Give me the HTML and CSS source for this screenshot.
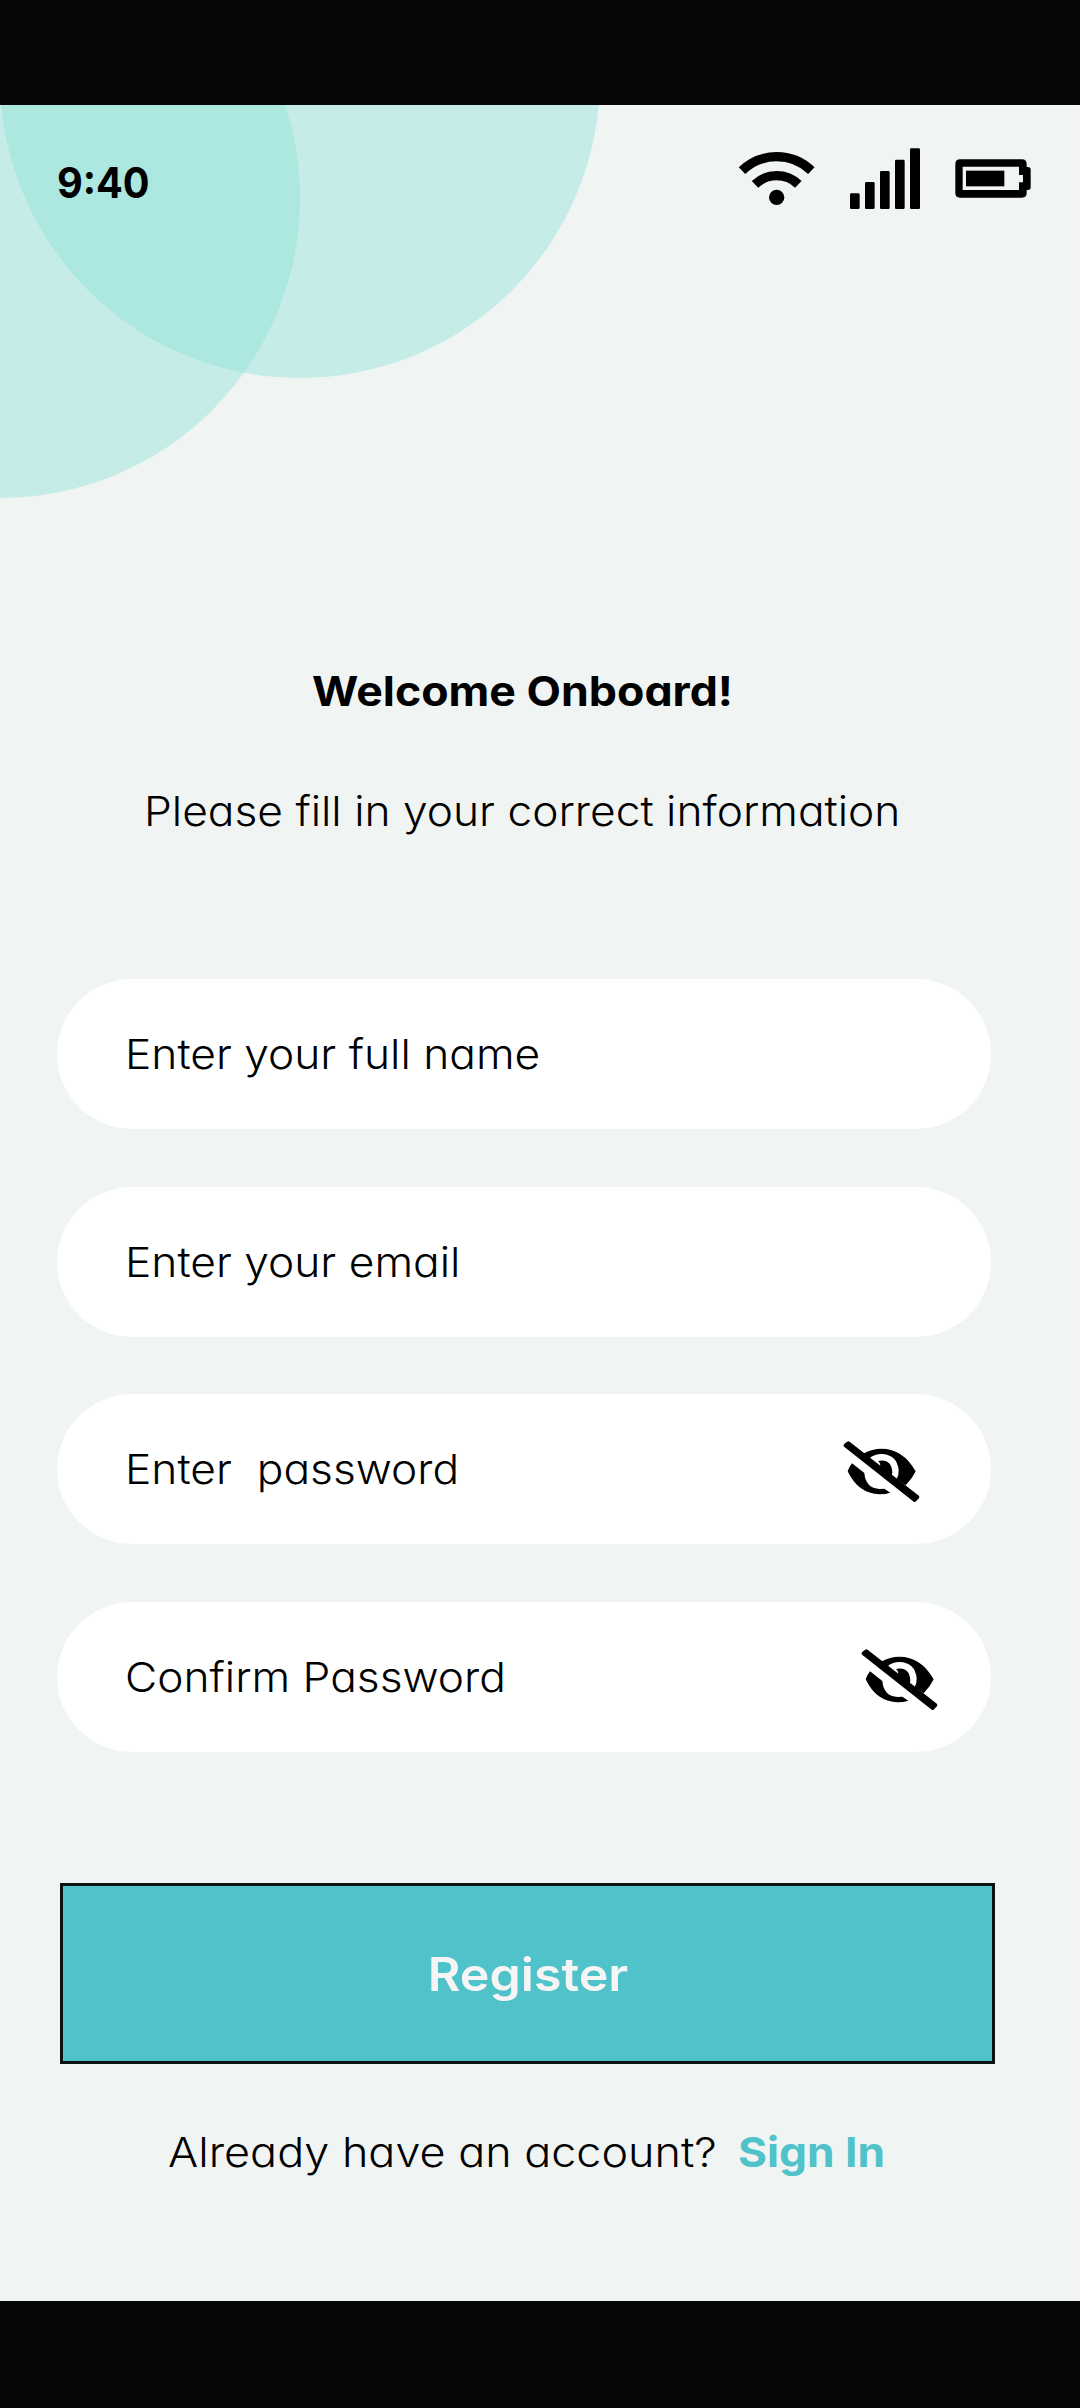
FILE: index.html
```html
<!DOCTYPE html>
<html lang="en">
<head>
<meta charset="utf-8">
<title>Register</title>
<link rel="stylesheet" href="styles.css">
</head>
<body>
<svg class="defs" aria-hidden="true">
  <symbol id="eye-off" viewBox="70 64 230 184">
    <path d="M78 77L86 71L293 232L285 241Z" stroke="#000" stroke-width="12" stroke-linejoin="round"/>
    <path d="M130 102Q158 87 185 87Q250 87 288 155Q278 177 258 197L231 178Q238 165 237 152Q232 104 185 103Q165 104 153 113L150 118Z"/>
    <path d="M175 124Q215 116 218 158L216 170L180 142Q185 132 175 124Z"/>
    <path d="M97 131L134 160Q138 206 180 208L194 207L212 219Q198 224 180 224Q115 222 84 155Q87 143 97 131Z"/>
  </symbol>
</svg>
<main class="screen">
  <div class="bubble bubble-top"></div>
  <div class="bubble bubble-left"></div>
  <header class="status">
    <span class="time"><span class="t">9:40</span></span>
    <div class="indicators">
      <svg class="wifi" viewBox="54 63 231 165">
        <g fill="none" stroke="#000" stroke-width="28">
          <path d="M66 122A150 150 0 0 1 274 122"/>
          <path d="M105 163A94 94 0 0 1 235 163"/>
        </g>
        <circle cx="170" cy="202" r="23"/>
      </svg>
      <svg class="signal" viewBox="390 54 210 183">
        <rect x="390" y="190" width="29" height="47" rx="4"/>
        <rect x="435" y="156" width="29" height="81" rx="4"/>
        <rect x="480" y="123" width="29" height="114" rx="4"/>
        <rect x="525" y="89" width="29" height="148" rx="4"/>
        <rect x="570" y="55" width="30" height="182" rx="4"/>
      </svg>
      <svg class="battery" viewBox="705 87 228 117">
        <path fill-rule="evenodd" d="M720 88H906Q920 88 920 102V111H924Q932 111 932 119V172Q932 180 924 180H920V189Q920 203 906 203H720Q706 203 706 189V102Q706 88 720 88ZM728 110V180H897V157H909V135H897V110Z"/>
        <rect x="738" y="122" width="115" height="47"/>
      </svg>
    </div>
  </header>
  <h1 class="title"><span class="t">Welcome Onboard!</span></h1>
  <p class="subtitle"><span class="t">Please fill in your correct information</span></p>
  <form class="form">
    <div class="field"><span class="t">Enter your full name</span></div>
    <div class="field"><span class="t">Enter your email</span></div>
    <div class="field"><span class="t">Enter&nbsp; password</span><svg class="eye"><use href="#eye-off"/></svg></div>
    <div class="field field-confirm"><span class="t">Confirm Password</span><svg class="eye"><use href="#eye-off"/></svg></div>
    <button class="register" type="button"><span class="t">Register</span></button>
  </form>
  <p class="signin"><span class="t question">Already have an account?</span><a class="t link">Sign In</a></p>
</main>
</body>
</html>
```

FILE: styles.css
```css
* { box-sizing: border-box; }
body {
  margin: 0;
  background: #070707;
  color: #000;
  font: 300 41px/60px Inter, "Liberation Sans", sans-serif;
  font-feature-settings: "cv11", "ss03";
}
.defs { display: none; }
.t { display: inline-block; transform: scaleX(1.08); transform-origin: left center; }
.screen {
  position: relative;
  overflow: hidden;
  width: 1080px;
  height: 2196px;
  margin: 105px 0 107px;
  background: #f0f4f3;
}
.bubble {
  position: absolute;
  width: 600px;
  height: 600px;
  border-radius: 50%;
  background: rgba(142, 226, 216, .44);
}
.bubble-top { left: 0; top: -327px; }
.bubble-left { left: -300px; top: -207px; }
.status {
  position: relative;
  display: flex;
  justify-content: space-between;
  padding: 43px 49px 0 57px;
  height: 556px;
}
.time { padding-top: 5px; font-size: 42px; font-weight: 700; }
.time .t { transform: scaleX(.945); }
.indicators { display: flex; align-items: flex-start; }
.wifi { width: 77px; height: 55px; margin: 3px 35px 0 0; }
.signal { width: 70px; height: 61px; margin-right: 35px; }
.battery { width: 76px; height: 39px; margin-top: 11px; }
.title { margin: 0; padding-left: 312px; font-size: 41px; font-weight: 700; line-height: 60px; white-space: nowrap; }
.title .t { transform: scaleX(1.09); }
.subtitle { margin: 60px 0 0; padding-left: 144px; white-space: nowrap; }
.form { display: flex; flex-direction: column; gap: 57.5px; margin: 138px 0 0 57px; width: 934px; }
.field {
  display: flex;
  align-items: center;
  justify-content: space-between;
  height: 150px;
  padding: 0 71px 0 68px;
  border-radius: 75px;
  background: #fff;
}
.field-confirm { padding-right: 53px; }
.eye { width: 76.7px; height: 61.3px; margin-top: 6px; }
.register {
  width: 935px;
  height: 181px;
  margin: 74px 0 0 3px;
  border: 3px solid #0a1414;
  background: #50c2c9;
  color: #f5f5f5;
  font: 600 46px/60px Inter, "Liberation Sans", sans-serif;
}
.register .t { transform: scaleX(1.09); transform-origin: center; }
.signin { display: flex; margin: 58px 0 0 168px; white-space: nowrap; }
.question { transform: scaleX(1.095); }
.link { margin-left: 69px; color: #50c2c9; font-weight: 700; }
```
